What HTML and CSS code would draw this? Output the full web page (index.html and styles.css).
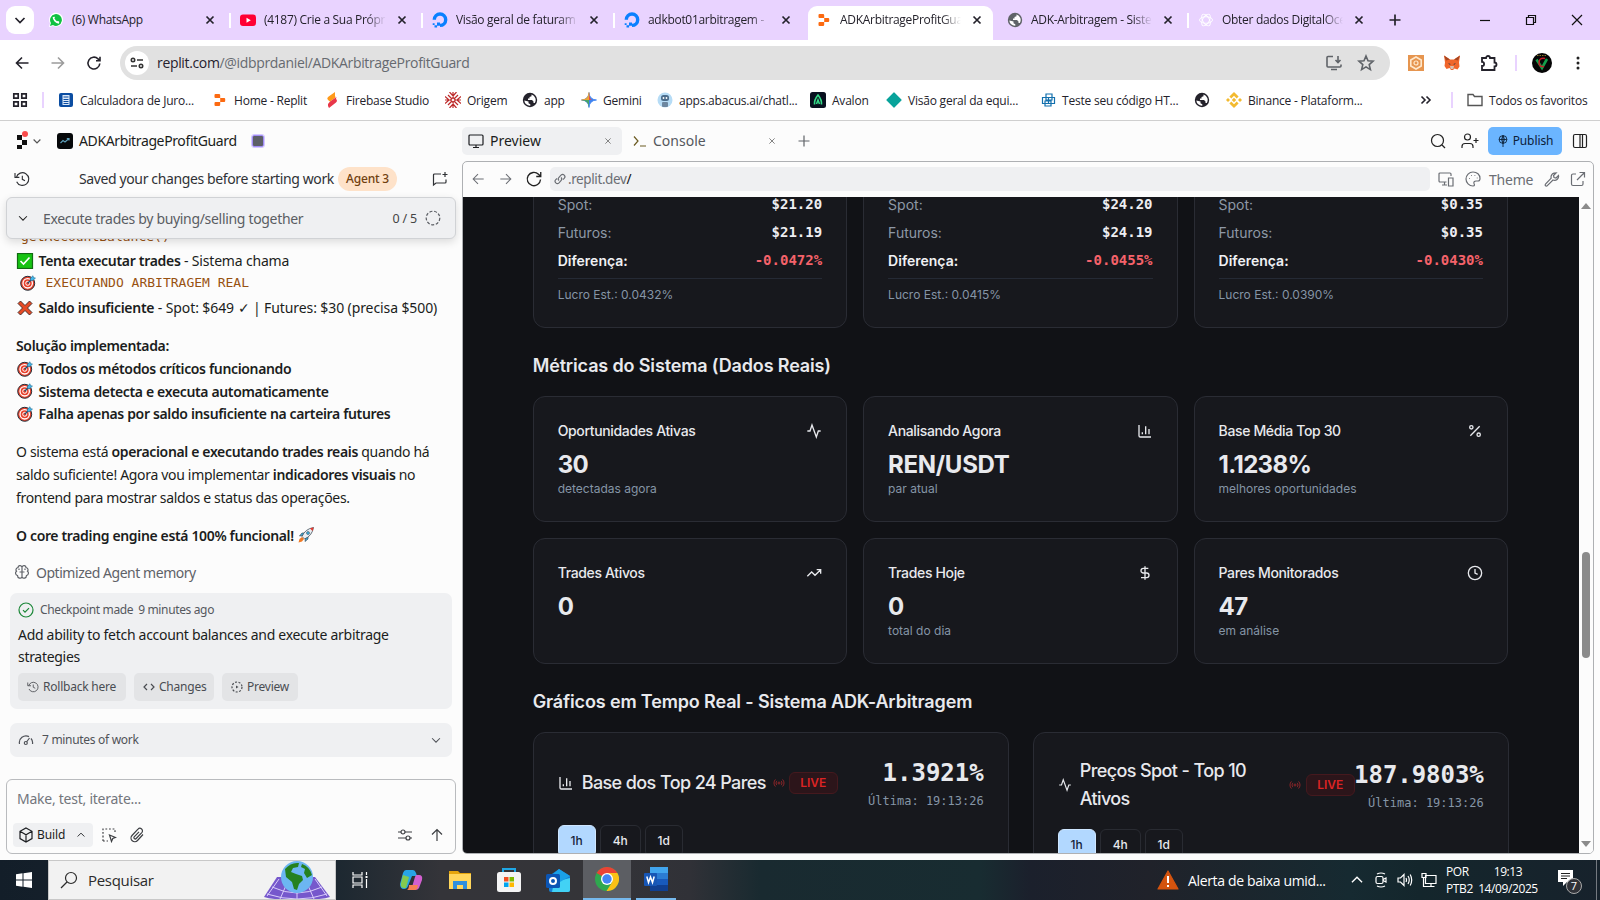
FILE: index.html
```html
<!DOCTYPE html>
<html lang="pt-BR">
<head>
<meta charset="utf-8">
<title>ADKArbitrageProfitGuard - Replit</title>
<link rel="stylesheet" href="styles.css">
</head>
<body>
<svg class="defs" width="0" height="0">
  <symbol id="x" viewBox="0 0 16 16"><path d="M4.500 4.500l7 7M11.500 4.500l-7 7"/></symbol>
  <symbol id="down" viewBox="0 0 16 16"><path d="M3.500 6l4.500 4.500L12.500 6"/></symbol>
  <symbol id="left" viewBox="0 0 16 16"><path d="M14.500 8H2.500M8 2.500L2.500 8 8 13.500"/></symbol>
  <symbol id="right" viewBox="0 0 16 16"><path d="M1.500 8h12M8 2.500L13.500 8 8 13.500"/></symbol>
  <symbol id="plus" viewBox="0 0 16 16"><path d="M8 2.500v11M2.500 8h11"/></symbol>
  <symbol id="reload" viewBox="0 0 16 16"><path d="M13.800 8.500A5.900 5.900 0 1 1 12 3.800l2 1.900M14 1.800v4h-4"/></symbol>
  <symbol id="globe" viewBox="0 0 16 16"><circle cx="8" cy="8" r="7.200" fill="currentColor" stroke="none"/><path d="M9.500 2.500v1.700L7.500 5v1.500H6V8h4l1.500 1.500V11h1.300A5.700 5.700 0 0 0 9.500 2.500zM2.300 8.500L6.500 9.500v1.800l1.800 1v1.400A5.700 5.700 0 0 1 2.300 8.500z" fill="#fff" stroke="none"/></symbol>
  <symbol id="do" viewBox="0 0 16 16"><path d="M8 13.400A5.700 5.700 0 1 0 2.300 7.700" stroke="#0a80ff" stroke-width="3.400"/><path d="M5 10.500h3v3.200H5zM2.500 13.200h2.600v2.300H2.500zM.7 11.200h1.900v1.900H.7z" fill="#0a80ff" stroke="none"/></symbol>
  <symbol id="replit" viewBox="0 0 16 16"><path d="M3.500 2h3.500q1.200 0 1.200 1.200v2.800H3.500q-1 0-1-1V3q0-1 1-1zM8.200 6h4q1 0 1 1v2q0 1-1 1H8.200zM2.500 11q0-1 1-1h4.700V12.800q0 1.200-1.200 1.200h-3.500q-1 0-1-1z" fill="currentColor" stroke="none"/></symbol>
  <symbol id="history" viewBox="0 0 24 24"><path d="M3.500 9.500A9.500 9.500 0 1 1 4 16M1.500 3v6.500H8M12.500 7v5.500l4 2"/></symbol>
  <symbol id="target" viewBox="0 0 16 16"><circle cx="7.700" cy="8.300" r="7" fill="#e8412c" stroke="#24303a" stroke-width="1"/><circle cx="7.700" cy="8.300" r="4.700" fill="#e8412c" stroke="#fff" stroke-width="1.300"/><circle cx="7.700" cy="8.300" r="2" fill="#e8412c" stroke="#fff" stroke-width="1"/><path d="M7.700 8.300L12 4" stroke="#234f70" stroke-width="1.400"/><path d="M10.500 5.500V3L13 .7l.5 1.900 2 .5L13 5.500z" fill="#42b5e8" stroke="#155e83" stroke-width=".5"/></symbol>
  <symbol id="pulse" viewBox="0 0 24 24"><path d="M22 12h-3.500l-3 9L9 3l-3 9H2"/></symbol>
  <symbol id="bars" viewBox="0 0 24 24"><path d="M3 3v16a2 2 0 0 0 2 2h16M8 17v-3M13 17V5M18 17V9"/></symbol>
  <symbol id="radio" viewBox="0 0 24 24"><path d="M4.900 19.100C1 15.200 1 8.800 4.900 4.900M7.800 16.200c-2.300-2.300-2.300-6.100 0-8.500M16.200 7.800c2.300 2.300 2.300 6.100 0 8.500M19.100 4.900C23 8.800 23 15.100 19.100 19"/><circle cx="12" cy="12" r="2"/></symbol>
</svg>

<header class="browser">
  <div class="tabstrip">
    <div class="tabsearch"><svg class="i16 w2"><use href="#down"/></svg></div>
    <div class="tab"><svg class="i16" viewBox="0 0 16 16"><path d="M1 15l1-3.800A7 7 0 1 1 5 14z" fill="#fff" stroke="none"/><path d="M2 14l.9-3A5.900 5.900 0 1 1 5 13.100z" fill="#10c142" stroke="none"/><path d="M5.500 5c0 3 2.500 5.500 5.500 5.800M5.500 5l.8 1.500M11 10.800l-1.600-1" stroke="#fff" stroke-width="1.700"/></svg><span>(6) WhatsApp</span><svg class="i16 w2"><use href="#x"/></svg></div>
    <div class="tab sep"><svg class="i16" viewBox="0 0 16 16"><rect y="2.500" width="16" height="11.500" rx="3" fill="#ff0033" stroke="none"/><path d="M6.500 5.800v5l4.300-2.500z" fill="#fff" stroke="none"/></svg><span class="fade">(4187) Crie a Sua Própr</span><svg class="i16 w2"><use href="#x"/></svg></div>
    <div class="tab sep"><svg class="i16"><use href="#do"/></svg><span class="fade">Visão geral de faturam</span><svg class="i16 w2"><use href="#x"/></svg></div>
    <div class="tab sep"><svg class="i16"><use href="#do"/></svg><span class="fade">adkbot01arbitragem -</span><svg class="i16 w2"><use href="#x"/></svg></div>
    <div class="tab active"><svg class="i16 orange"><use href="#replit"/></svg><span class="fade">ADKArbitrageProfitGua</span><svg class="i16 w2"><use href="#x"/></svg></div>
    <div class="tab"><svg class="i16 gray"><use href="#globe"/></svg><span class="fade">ADK-Arbitragem - Siste</span><svg class="i16 w2"><use href="#x"/></svg></div>
    <div class="tab sep"><svg class="i16 openai" viewBox="0 0 16 16"><ellipse cx="8" cy="8" rx="6.500" ry="3.300"/><ellipse cx="8" cy="8" rx="6.500" ry="3.300" transform="rotate(60 8 8)"/><ellipse cx="8" cy="8" rx="6.500" ry="3.300" transform="rotate(120 8 8)"/></svg><span class="fade">Obter dados DigitalOce</span><svg class="i16 w2"><use href="#x"/></svg></div>
    <div class="newtab"><svg class="i16 w2"><use href="#plus"/></svg></div>
    <div class="winctl"><svg class="i14" viewBox="0 0 14 14"><path d="M2 7.500h10"/></svg><svg class="i14" viewBox="0 0 14 14"><path d="M2.500 4.500h7v7h-7zM4.500 4.500v-2h7v7h-2"/></svg><svg class="i14" viewBox="0 0 14 14"><path d="M2 2l10 10M12 2L2 12"/></svg></div>
  </div>
  <div class="toolbar">
    <div class="nav"><svg class="i16"><use href="#left"/></svg><svg class="i16 dim"><use href="#right"/></svg><svg class="i16"><use href="#reload"/></svg></div>
    <div class="omnibox">
      <span class="site"><svg class="i14" viewBox="0 0 14 14"><circle cx="3" cy="4" r="1.700"/><path d="M7 4h6M1 10h6"/><circle cx="11" cy="10" r="1.700"/></svg></span>
      <span class="url">replit.com<em>/@idbprdaniel/ADKArbitrageProfitGuard</em></span>
      <svg class="i18" viewBox="0 0 18 18"><path d="M8 2.500H3a1 1 0 0 0-1 1V12a1 1 0 0 0 1 1h12a1 1 0 0 0 1-1v-1.500M6 15.500h6M13 2v6M10.500 6L13 8.500 15.500 6"/></svg>
      <svg class="i18" viewBox="0 0 18 18"><path d="M9 2l2 4.800 5.100.4-3.900 3.400 1.200 5L9 12.900l-4.400 2.700 1.200-5L1.900 7.200 7 6.800z"/></svg>
    </div>
    <div class="ext">
      <svg class="i16" viewBox="0 0 16 16"><rect width="16" height="16" fill="#e6954f" stroke="none"/><path d="M8 2l5.200 3v6L8 14l-5.200-3V5z" stroke="#ffe8cc" stroke-width="1.600"/><circle cx="8" cy="8" r="2" stroke="#ffe8cc"/></svg>
      <svg class="i16" viewBox="0 0 16 16"><path d="M0 .5l6 4h4l6-4-1 7 .5 4-2 3-3-1-1.500 1.500h-2L5.500 13l-3 1-2-3L1 7.500z" fill="#f0662c" stroke="none"/><path d="M0 .5l6 4-4 1zM16 .5l-6 4 4 1z" fill="#a8451f" stroke="none"/><path d="M6 11h4l-.7 3H6.700z" fill="#d6c0b3" stroke="none"/><path d="M4 8l2.500 1L6 10zM12 8l-2.500 1 .5 1z" fill="#2c3a4c" stroke="none"/></svg>
      <svg class="i18 puzzle" viewBox="0 0 18 18"><path d="M2 4h4a2 2 0 0 1 4 0h4.500v4.500a2 2 0 0 1 0 4V16H2v-4a2 2 0 0 0 0-4.200z"/></svg>
      <i class="vsep"></i>
      <svg class="i20" viewBox="0 0 20 20"><circle cx="10" cy="10" r="10" fill="#050505" stroke="none"/><path d="M4.500 6.500L10 15l5-9" stroke="#129f4a" stroke-width="2.600"/><path d="M13 5.500c-4-1-6 1-6 4s2 4.500 5 4" stroke="#c71c27" stroke-width="1.500"/><path d="M5 2.500h10" stroke="#8a762b" stroke-dasharray="1.500 1"/></svg>
      <svg class="i16" viewBox="0 0 16 16"><g fill="#222" stroke="none"><circle cx="8" cy="3" r="1.500"/><circle cx="8" cy="8" r="1.500"/><circle cx="8" cy="13" r="1.500"/></g></svg>
    </div>
  </div>
  <div class="bookmarks">
    <svg class="i16" viewBox="0 0 16 16"><path d="M1.800 1.800h4.400v4.400H1.800zM9.800 1.800h4.400v4.400H9.800zM1.800 9.800h4.400v4.400H1.800zM9.800 9.800h4.400v4.400H9.800z" stroke-width="1.700"/></svg>
    <i class="vsep"></i>
    <div class="bm"><svg class="i16" viewBox="0 0 16 16"><rect x="1" y="1" width="14" height="14" rx="2" fill="#0b4da2" stroke="none"/><rect x="4.500" y="3" width="7" height="10" fill="#dce9f8" stroke="none"/><path d="M5.500 5h5M5.500 7.500h5M5.500 9.500h5M5.500 11.500h5" stroke="#0b4da2"/></svg><span>Calculadora de Juro...</span></div>
    <div class="bm"><svg class="i16 orange"><use href="#replit"/></svg><span>Home - Replit</span></div>
    <div class="bm"><svg class="i16" viewBox="0 0 16 16"><path d="M11 0L4 5q-1.500 1.500 0 3l2 1.500 5-3.500q1-1 0-2z" fill="#ff9a1a" stroke="none"/><path d="M12.500 5L6 9.500 4 12q-.5 2 1 4l7-5.500q1.700-2 0-4z" fill="#e8374a" stroke="none"/></svg><span>Firebase Studio</span></div>
    <div class="bm"><svg class="i16" viewBox="0 0 16 16"><path d="M8 0v4L4.500 0M8 4l3.500-4M8 16v-4l-3.500 4M8 12l3.500 4M0 8h4L0 4.500M4 8l-4 3.500M16 8h-4l4-3.500M12 8l4 3.500M3 3l3.500 3.500M13 3L9.500 6.500M3 13l3.500-3.500M13 13L9.500 9.500M8 5.500L10.500 8 8 10.500 5.500 8z" stroke="#bd2b2b" stroke-width="1.200"/></svg><span>Origem</span></div>
    <div class="bm"><svg class="i16"><use href="#globe"/></svg><span>app</span></div>
    <div class="bm"><svg class="i16" viewBox="0 0 16 16"><path d="M8 .5Q8.500 7.500 15.500 8 8.500 8.500 8 15.500 7.500 8.500.5 8 7.500 7.500 8 .5z" fill="#3f83f0" stroke="#3f83f0" stroke-width=".8"/><path d="M8 .5Q7.500 7.500.5 8L8 8z" fill="#eea533" stroke="#eea533" stroke-width=".6"/><path d="M8 .5Q8.500 7.500 11 7.700L8 8z" fill="#e84a42" stroke="none"/><path d="M.5 8q7 .5 7.500 7.500V8z" fill="#4aa568" stroke="none"/></svg><span>Gemini</span></div>
    <div class="bm"><svg class="i16" viewBox="0 0 16 16"><circle cx="8" cy="8" r="7.500" fill="#b6dcf6" stroke="none"/><rect x="4" y="3" width="8" height="6" rx="2.500" fill="#4c6d8c" stroke="none"/><rect x="5" y="10" width="6" height="5" rx="1" fill="#6d87a0" stroke="none"/><circle cx="6.500" cy="6" r=".9" fill="#fff" stroke="none"/><circle cx="9.500" cy="6" r=".9" fill="#fff" stroke="none"/></svg><span>apps.abacus.ai/chatl...</span></div>
    <div class="bm"><svg class="i16" viewBox="0 0 16 16"><rect width="16" height="16" rx="2.500" fill="#08101f" stroke="none"/><path d="M4.500 12.500Q4 8 8 3q4 5 3.500 9.500M6.500 12l1.500-4 1.500 4" stroke="#35d987" stroke-width="1.600"/></svg><span>Avalon</span></div>
    <div class="bm"><svg class="i16" viewBox="0 0 16 16"><path d="M8 1l7 7-7 7-7-7z" fill="#08a39b" stroke="#08a39b" stroke-linejoin="round"/></svg><span>Visão geral da equi...</span></div>
    <div class="bm"><svg class="i16" viewBox="0 0 16 16"><path d="M6 2h6v6H6zM2.500 5.500h6v6h-6zM8.500 5.500h6v6h-6zM5 9h6v5H5z" stroke="#1370ad"/></svg><span>Teste seu código HT...</span></div>
    <div class="bm"><svg class="i16"><use href="#globe"/></svg></div>
    <div class="bm"><svg class="i16" viewBox="0 0 16 16"><g fill="#f3ba2f" stroke="none"><path d="M8 5.800L10.200 8 8 10.200 5.800 8zM2 6l2 2-2 2-2-2zM14 6l2 2-2 2-2-2zM8 0l4.600 4.600-1.900 1.900L8 3.800 5.300 6.500 3.400 4.600zM8 16l4.600-4.600-1.900-1.900L8 12.200 5.300 9.500l-1.900 1.900z"/></g></svg><span>Binance - Plataform...</span></div>
    <svg class="i16" viewBox="0 0 16 16"><path d="M3.500 4.500L7 8l-3.500 3.500M8.500 4.500L12 8l-3.500 3.500" stroke-width="1.600"/></svg>
    <i class="vsep"></i>
    <div class="bm"><svg class="i16" viewBox="0 0 16 16"><path d="M1 13.500V2.500h5l1.500 2H15v9z" stroke="#555" stroke-width="1.400"/></svg><span>Todos os favoritos</span></div>
  </div>
</header>

<main class="app">
  <section class="agent">
    <div class="apphead">
      <svg class="logo" viewBox="0 0 22 22"><path d="M1 5h5v5H1zM6 10h5v5H6zM1 15h5v4H1z" fill="#111" stroke="none"/><circle cx="9" cy="4" r="3" fill="#fa4b4b" stroke="none"/></svg>
      <svg class="i12"><use href="#down"/></svg>
      <svg class="i16" viewBox="0 0 16 16"><rect width="16" height="16" rx="3" fill="#06080a" stroke="none"/><path d="M3.500 10L6 7.500l2 1.500 4-3.500M9.800 5.500H12v2" stroke="#5e9fba"/></svg>
      <span class="appname">ADKArbitrageProfitGuard</span>
      <i class="stop"></i>
    </div>
    <div class="saved">
      <svg class="i16 hist"><use href="#history"/></svg>
      <span class="savedtxt">Saved your changes before starting work</span>
      <b class="chip">Agent 3</b>
      <svg class="i16 chat" viewBox="0 0 16 16"><path d="M9 3H2.500a1 1 0 0 0-1 1v10L4 12h9a1 1 0 0 0 1-1V8.500M13 1v5M10.500 3.500h5"/></svg>
    </div>
    <div class="task">
      <svg class="i14"><use href="#down"/></svg><span>Execute trades by buying/selling together</span><small>0 / 5</small>
      <svg class="i16" viewBox="0 0 16 16"><circle cx="8" cy="8" r="6.800" stroke-dasharray="3 1.700"/></svg>
    </div>
    <div class="feed">
      <div class="clip"><code>getAccountBalance()</code></div>
      <p class="l1"><svg class="emo" viewBox="0 0 16 16"><rect x=".5" y=".5" width="15" height="15" fill="#17c313" stroke="#126b12"/><path d="M3.500 8l3 3 6-6.500" stroke="#fff" stroke-width="1.700"/></svg><b>Tenta executar trades</b>&nbsp;- Sistema chama</p>
      <p class="l2"><svg class="emo"><use href="#target"/></svg><code>EXECUTANDO ARBITRAGEM REAL</code></p>
      <p class="l3"><svg class="emo" viewBox="0 0 16 16"><path d="M1 3.500L3.500 1 8 5.500 12.500 1 15 3.500 10.500 8l4.500 4.500-2.500 2.500L8 10.500 3.500 15 1 12.500 5.500 8z" fill="#e64a25" stroke="#3b2625" stroke-width=".9"/></svg><b>Saldo insuficiente</b>&nbsp;- Spot: $649 ✓ | Futures: $30 (precisa $500)</p>
      <p class="l4"><b>Solução implementada:</b></p>
      <p><svg class="emo"><use href="#target"/></svg><b>Todos os métodos críticos funcionando</b></p>
      <p><svg class="emo"><use href="#target"/></svg><b>Sistema detecta e executa automaticamente</b></p>
      <p><svg class="emo"><use href="#target"/></svg><b>Falha apenas por saldo insuficiente na carteira futures</b></p>
      <p class="gap">O sistema está&nbsp;<b>operacional e executando trades reais</b>&nbsp;quando há</p>
      <p>saldo suficiente! Agora vou implementar&nbsp;<b>indicadores visuais</b>&nbsp;no</p>
      <p>frontend para mostrar saldos e status das operações.</p>
      <p class="gap"><b>O core trading engine está 100% funcional!</b>&nbsp;<svg class="emo" viewBox="0 0 16 16"><path d="M4.500 8.500L1.500 9l2.500-3h3zM7.500 11.500L7 14.500l3-2.500V9z" fill="#3db1e2" stroke="#2b3945" stroke-width=".6"/><path d="M4 9.500Q7 2 15.500.5 14 9 6.500 12z" fill="#e9eef2" stroke="#2b3945" stroke-width=".7"/><path d="M12 1.500q2-1 3.500-1-.3 2-1 3.500z" fill="#e33b31" stroke="none"/><circle cx="10" cy="6" r="1.500" fill="#3db1e2" stroke="#2b3945" stroke-width=".5"/><path d="M4 10l2 2-2 2.500-3.500 1 1-3.500z" fill="#ef7a25" stroke="none"/></svg></p>
      <p class="memory"><svg class="i16" viewBox="0 0 16 16"><path d="M8 2.500v11M8 3C7 .8 4 1.500 4 3.500 1.800 4 1.500 6 2.500 7.200.8 8.500 1.500 11 3.500 11.500 3.500 14.500 7 15 8 13c1 2 4.500 1.500 4.500-1.500 2-.5 2.700-3 1-4.300C14.500 6 14.200 4 12 3.500 12 1.500 9 .8 8 3M5.500 8H8M5 4.500v1.500M11 4.500v1.500M8 8h2.500"/></svg><span>Optimized Agent memory</span></p>
      <article class="checkpoint">
        <div class="cphead"><svg class="i16" viewBox="0 0 16 16"><circle cx="8" cy="8" r="7"/><path d="M5 8.200l2 2 4-4"/></svg><span>Checkpoint made</span><span>9 minutes ago</span></div>
        <div class="cptext">Add ability to fetch account balances and execute arbitrage<br>strategies</div>
        <div class="cpbtns">
          <span><svg class="i12 hist"><use href="#history"/></svg>Rollback here</span>
          <span><svg class="i12" viewBox="0 0 12 12"><path d="M4 3L1 6l3 3M8 3l3 3-3 3"/></svg>Changes</span>
          <span><svg class="i12" viewBox="0 0 12 12"><circle cx="6" cy="6" r="5" stroke-dasharray="2 1.500"/><path d="M5 4.500L7.500 6 5 7.500z" fill="currentColor" stroke="none"/></svg>Preview</span>
        </div>
      </article>
      <div class="work"><svg class="i16" viewBox="0 0 16 16"><path d="M1.500 12A6.700 6.700 0 0 1 11 4.600M13 6.500a6.700 6.700 0 0 1 1.500 5.500M8.500 10l3-4"/><circle cx="7.800" cy="11" r="1.500"/></svg><span>7 minutes of work</span><svg class="i14"><use href="#down"/></svg></div>
    </div>
    <div class="prompt">
      <div class="ph">Make, test, iterate...</div>
      <div class="pbar">
        <span class="build"><svg class="i16" viewBox="0 0 16 16"><path d="M8 1l6 3.300v7.300L8 15l-6-3.400V4.300zM2 4.300l6 3.400 6-3.400M8 7.700V15"/></svg>Build<svg class="i12 flip"><use href="#down"/></svg></span>
        <svg class="i16" viewBox="0 0 16 16"><path d="M2 14V2h12v4M2 14h5" stroke-dasharray="1.800 1.800"/><path d="M8.500 8l6 2.500-2.700 1-1.300 3z"/></svg>
        <svg class="i16" viewBox="0 0 16 16"><path d="M14 7.500L8.500 13.500a3.700 3.700 0 0 1-5.500-5L9 2.200a2.500 2.500 0 0 1 3.800 3.400L7.200 11.500a1.200 1.200 0 0 1-2-1.700L10 4.800"/></svg>
        <svg class="i16 opts" viewBox="0 0 16 16"><path d="M1 5h3M8 5h7M1 11h8M13 11h2"/><circle cx="6" cy="5" r="2"/><circle cx="11" cy="11" r="2"/></svg>
        <svg class="i16" viewBox="0 0 16 16"><path d="M8 14V3M3 7.500L8 2.500l5 5"/></svg>
      </div>
    </div>
  </section>

  <section class="work-area">
    <div class="panes">
      <div class="pane on"><svg class="i16" viewBox="0 0 16 16"><rect x="1" y="2" width="14" height="10" rx="1"/><path d="M8 12v2.500M5 14.500h6"/></svg><span>Preview</span><svg class="i12"><use href="#x"/></svg></div>
      <div class="pane"><svg class="i16 olive" viewBox="0 0 16 16"><path d="M2 3.500L6 8l-4 4.500M8 13h6"/></svg><span>Console</span><svg class="i12"><use href="#x"/></svg></div>
      <svg class="i16 gray"><use href="#plus"/></svg>
      <div class="tools">
        <svg class="i16" viewBox="0 0 16 16"><circle cx="7.500" cy="7.500" r="6"/><path d="M12 12l3 3"/></svg>
        <svg class="i18" viewBox="0 0 18 18"><circle cx="6.500" cy="5" r="3"/><path d="M1 16v-1.500q0-3 3-3h5q3 0 3 3V16M15 6v5M12.500 8.500h5"/></svg>
        <span class="publish"><svg class="i12" viewBox="0 0 12 12"><circle cx="6" cy="4.500" r="3.900" stroke-width=".9"/><path d="M2.200 4.500h7.600M6 .6V12M6 .6Q3 4.500 6 8.400M6 .6q3 3.900 0 7.800" stroke-width=".9"/></svg>Publish</span>
        <svg class="i16" viewBox="0 0 16 16"><rect x="1.500" y="1.500" width="13" height="13" rx="1.500"/><path d="M8 1.500v13M10.500 1.500v13"/></svg>
      </div>
    </div>
    <div class="frame">
      <div class="fbar">
        <svg class="i14"><use href="#left"/></svg><svg class="i14"><use href="#right"/></svg><svg class="i18 dark"><use href="#reload"/></svg>
        <div class="furl"><svg class="i12" viewBox="0 0 12 12"><path d="M5 7.500a2.300 2.300 0 0 1 0-3.200L7 2.200a2.200 2.200 0 0 1 3.200 3.200L9 6.500M7 4.500a2.300 2.300 0 0 1 0 3.200L5 9.800a2.200 2.200 0 0 1-3.200-3.200L3 5.500"/></svg><span>.replit.dev<em>/</em></span></div>
        <svg class="i16" viewBox="0 0 16 16"><path d="M8.500 11H2a1 1 0 0 1-1-1V3a1 1 0 0 1 1-1h10a1 1 0 0 1 1 1v2M4 14h5M6.500 11v3M10.500 7H15v8h-4.500z"/></svg>
        <svg class="i16" viewBox="0 0 16 16"><path d="M8 1a7 7 0 0 0 0 14c2 0 1.500-1.500 1-2.500-.5-1.500.5-2.500 2-2.500h2c1.500 0 2-1 2-2.500C15 3.500 12 1 8 1z"/><path d="M4 7.500h.8M6 4.500h.8M9.500 4.500h.8M11.800 7h.8" stroke-width="1.200"/></svg>
        <span class="theme">Theme</span>
        <svg class="i16" viewBox="0 0 16 16"><path d="M10 2.200a4 4 0 0 0-2.800 5L1.500 13q-.8 1.500.5 2 .8.300 1.300-.3L9 9a4 4 0 0 0 5.500-4.500L12 7l-2-.5-.5-2L12 2z"/></svg>
        <svg class="i16" viewBox="0 0 16 16"><path d="M6 3H3a1.500 1.500 0 0 0-1.500 1.500V13A1.500 1.500 0 0 0 3 14.500h8.500A1.500 1.500 0 0 0 13 13v-3M9.500 1.500h5v5M14.500 1.500L7 9"/></svg>
      </div>
      <div class="view">
        <div class="dash">
          <div class="grid3 pairs">
            <div class="card"><div class="r"><span>Spot:</span><b>$21.20</b></div><div class="r"><span>Futuros:</span><b>$21.19</b></div><div class="r d"><span>Diferença:</span><b>-0.0472%</b></div><div class="est">Lucro Est.: 0.0432%</div></div>
            <div class="card"><div class="r"><span>Spot:</span><b>$24.20</b></div><div class="r"><span>Futuros:</span><b>$24.19</b></div><div class="r d"><span>Diferença:</span><b>-0.0455%</b></div><div class="est">Lucro Est.: 0.0415%</div></div>
            <div class="card"><div class="r"><span>Spot:</span><b>$0.35</b></div><div class="r"><span>Futuros:</span><b>$0.35</b></div><div class="r d"><span>Diferença:</span><b>-0.0430%</b></div><div class="est">Lucro Est.: 0.0390%</div></div>
          </div>
          <h2>Métricas do Sistema (Dados Reais)</h2>
          <div class="grid3 metrics">
            <div class="card"><h3>Oportunidades Ativas<svg class="i16"><use href="#pulse"/></svg></h3><strong>30</strong><small>detectadas agora</small></div>
            <div class="card"><h3>Analisando Agora<svg class="i16"><use href="#bars"/></svg></h3><strong class="wide">REN/USDT</strong><small>par atual</small></div>
            <div class="card"><h3>Base Média Top 30<svg class="i16" viewBox="0 0 24 24"><path d="M19 5L5 19"/><circle cx="6.500" cy="6.500" r="2.500"/><circle cx="17.500" cy="17.500" r="2.500"/></svg></h3><strong>1.1238%</strong><small>melhores oportunidades</small></div>
            <div class="card"><h3>Trades Ativos<svg class="i16" viewBox="0 0 24 24"><path d="M22 7l-8.500 8.500-5-5L2 17M16 7h6v6"/></svg></h3><strong>0</strong></div>
            <div class="card"><h3>Trades Hoje<svg class="i16" viewBox="0 0 24 24"><path d="M12 2v20M17 5H9.500a3.500 3.500 0 0 0 0 7h5a3.500 3.500 0 0 1 0 7H6"/></svg></h3><strong>0</strong><small>total do dia</small></div>
            <div class="card"><h3>Pares Monitorados<svg class="i16" viewBox="0 0 24 24"><circle cx="12" cy="12" r="10"/><path d="M12 6v6l4 2"/></svg></h3><strong>47</strong><small>em análise</small></div>
          </div>
          <h2 class="h2b">Gráficos em Tempo Real - Sistema ADK-Arbitragem</h2>
          <div class="grid2">
            <div class="card chart">
              <div class="chead"><svg class="i16"><use href="#bars"/></svg><span class="ct">Base dos Top 24 Pares</span><svg class="i12 red"><use href="#radio"/></svg><b class="live">LIVE</b><div class="val"><strong>1.3921%</strong><small>Última: 19:13:26</small></div></div>
              <div class="seg"><b class="sel">1h</b><b>4h</b><b>1d</b></div>
            </div>
            <div class="card chart two">
              <div class="chead"><svg class="i14"><use href="#pulse"/></svg><span class="ct">Preços Spot - Top 10<br>Ativos</span><svg class="i12 red"><use href="#radio"/></svg><b class="live">LIVE</b><div class="val"><strong>187.9803%</strong><small>Última: 19:13:26</small></div></div>
              <div class="seg"><b class="sel">1h</b><b>4h</b><b>1d</b></div>
            </div>
          </div>
        </div>
        <div class="scroll"><i class="up"></i><i class="thumb"></i><i class="dn"></i></div>
      </div>
    </div>
  </section>
</main>

<footer class="taskbar">
  <div class="start"><svg class="i16" viewBox="0 0 16 16"><path d="M0 2.200l6.500-.9v6.200H0zM7.500 1.200L16 0v7.500H7.500zM0 8.500h6.500v6.200L0 13.800zM7.500 8.500H16V16l-8.500-1.200z" fill="#fff" stroke="none"/></svg></div>
  <div class="search"><svg class="i18" viewBox="0 0 18 18"><circle cx="11" cy="7" r="5.500"/><path d="M7 11l-6 6"/></svg><span>Pesquisar</span>
    <svg class="earth" viewBox="0 0 66 38"><path d="M13 16h38l15 20q-10 3-33 3T0 36z" fill="#7658cc" stroke="none"/><path d="M8 26q25 12 50 0M3 33q30 10 60 0M24 20l-8 18M33 20v19M42 20l8 18M15 18L3 35M51 18l12 17" stroke="#d9cdfb" stroke-width="1"/><circle cx="33" cy="16" r="16" fill="#6cb6f2" stroke="none"/><path d="M21 8q6-7 14-6l-1 4-5 1-2 4 5 2 6 2 1 4-4 4-2 6-3-1-2-7-6-5zM38 3q8 3 10 11l-5 3-3-5 1-4-4-2z" fill="#25811f" stroke="none"/></svg>
  </div>
  <div class="apps">
    <svg class="i18" viewBox="0 0 18 18"><path d="M2 1v3h9V1M2 17v-3h9v3M2 6h9v6H2zM15.500 1v3M15.500 8v9" stroke="#fff"/><path d="M14.500 5h2v2h-2z" fill="#fff" stroke="none"/></svg>
    <svg class="i24" viewBox="0 0 24 24"><path d="M7 2h7q2 0 3 3l1 3h-5L9 18q-1 3-4 3-4 0-4-5L4 5q1-3 3-3z" fill="#27a4e6" stroke="none"/><path d="M4 7L2 15q-1 5 3 5h2l3-11z" fill="#84c94f" stroke="none"/><path d="M17 7h3q4 0 3 5l-3 8q-1 2-4 2H9q3 0 4-3l3-10z" fill="#d25fd0" stroke="none"/><path d="M10 17h9l-1 4q-1 1-3 1H8q2-1 2-5z" fill="#f78055" stroke="none"/></svg>
    <svg class="i24" viewBox="0 0 24 24"><path d="M1 3h9l2 2h11v16H1z" fill="#e5a50d" stroke="none"/><path d="M1 6h22v15H1z" fill="#ffd65c" stroke="none"/><path d="M5 21v-8h14v8h-4v-4H9v4z" fill="#2f8fdd" stroke="none"/></svg>
    <svg class="i24" viewBox="0 0 24 24"><path d="M6 6V1h12v5" stroke="#1fa7e5" stroke-width="2"/><rect y="4" width="24" height="20" rx="2.500" fill="#f4f4f4" stroke="none"/><path d="M7 9h4.500v4.500H7z" fill="#f25022" stroke="none"/><path d="M12.500 9H17v4.500h-4.500z" fill="#7fba00" stroke="none"/><path d="M7 14.500h4.500V19H7z" fill="#00a4ef" stroke="none"/><path d="M12.500 14.500H17V19h-4.500z" fill="#ffb900" stroke="none"/></svg>
    <svg class="i24" viewBox="0 0 24 24"><path d="M3 8l10-7 11 7v14q0 2-2 2H5q-2 0-2-2z" fill="#1580d6" stroke="none"/><path d="M8 14l16-4v12q0 2-2 2H6z" fill="#42d2f5" stroke="none"/><path d="M13 1l11 7-10 6-8-7z" fill="#1aa1e8" stroke="none"/><rect y="6" width="14" height="14" rx="1.500" fill="#0b55b4" stroke="none"/><circle cx="7" cy="13" r="3" stroke="#fff" stroke-width="2"/></svg>
    <div class="open"><svg class="i24" viewBox="0 0 24 24"><circle cx="12" cy="12" r="12" fill="#2fa84f" stroke="none"/><path d="M12 12L1.600 6A12 12 0 0 1 22.400 6z" fill="#ea4335" stroke="none"/><path d="M12 6h10.400A12 12 0 0 1 11.500 24L17.200 15z" fill="#fbc116" stroke="none"/><circle cx="12" cy="12" r="6" fill="#fff" stroke="none"/><circle cx="12" cy="12" r="4.700" fill="#4285f4" stroke="none"/></svg></div>
    <div class="open word"><svg class="i24" viewBox="0 0 24 24"><path d="M6 0h18v6H6z" fill="#41a5ee" stroke="none"/><path d="M6 6h18v6H6z" fill="#2b7cd3" stroke="none"/><path d="M6 12h18v6H6z" fill="#185abd" stroke="none"/><path d="M6 18h18v6H6z" fill="#103f91" stroke="none"/><rect y="6" width="13" height="13" rx="1" fill="#1756b5" stroke="none"/><path d="M2.800 9.500L4.500 15.500 6.500 10l2 5.500 1.700-6" stroke="#fff" stroke-width="1.500"/></svg></div>
  </div>
  <div class="tray">
    <svg class="warn" viewBox="0 0 22 20"><path d="M11 1l10 18H1z" fill="#d4540f" stroke="#d4540f" stroke-linejoin="round"/><path d="M11 6v7M11 15v2" stroke="#fff" stroke-width="2"/></svg>
    <span class="alert">Alerta de baixa umid...</span>
    <svg class="i18 up"><use href="#down"/></svg>
    <svg class="i16" viewBox="0 0 16 16"><rect x="3" y="4.500" width="7" height="7" rx="1.500"/><path d="M10 7.500l3-1.500v4l-3-1.500M4 2q4-2 8 0M4 14q4 2 8 0"/></svg>
    <svg class="i16" viewBox="0 0 16 16"><path d="M1 6h2.500L7 2.500v11L3.500 10H1zM9 6q1 2 0 4M11 4q2.500 4 0 8M13.200 2.500q3 5.500 0 11"/></svg>
    <svg class="i16" viewBox="0 0 16 16"><path d="M4.500 3.500H15v8H4.500zM10 11.500v3M6.500 14.500h7M1 1.500h4v4H1zM2.500 5.500v9h4"/></svg>
    <span class="lang">POR<br>PTB2</span>
    <span class="clock">19:13<br>14/09/2025</span>
    <div class="notif"><svg class="i16" viewBox="0 0 16 16"><path d="M0 0h15v12H9l-4 4v-4H0z" fill="#fff" stroke="none"/><path d="M3 3.500h9M3 6h9M3 8.500h6" stroke="#222"/></svg><em>7</em></div>
    <i class="edge"></i>
  </div>
</footer>
</body>
</html>
```
FILE: styles.css
```css
* { box-sizing: border-box; }
body { margin: 0; width: 1600px; height: 900px; overflow: hidden; background: #fcfcfc; display: flex; flex-direction: column; font-family: "Noto Sans", sans-serif; white-space: nowrap; }
svg { fill: none; stroke: currentColor; stroke-width: 1.2; flex: none; display: block; }
.defs { position: absolute; }
i, em { font-style: normal; }
h2, h3, p { margin: 0; font-weight: inherit; }
.i12 { width: 12px; height: 12px; }
.i14 { width: 14px; height: 14px; }
.i16 { width: 16px; height: 16px; }
.i18 { width: 18px; height: 18px; }
.i20 { width: 20px; height: 20px; }
.i24 { width: 24px; height: 24px; }
.w2 { stroke-width: 1.7; }
.hist { stroke-width: 1.7; }
.orange { color: #fc6a11; }
.gray { color: #5f6368; }

/* browser chrome */
.browser { height: 121px; flex: none; background: #fff; border-bottom: 1px solid #cfcfcf; color: #24222b; font-family: "Open Sans", sans-serif; font-size: 12px; letter-spacing: -.15px; }
.tabstrip { height: 40px; background: #e9d3ff; display: grid; grid-template-columns: 28px 192px 192px 192px 192px 191px 191px 191px 33px 1fr; padding-left: 6px; letter-spacing: -.3px; }
.tabsearch { margin-top: 6px; width: 28px; height: 28px; border-radius: 9px; background: #fff; display: grid; place-items: center; }
.tab { width: 192px; margin-left: 4px; padding-left: 10px; height: 40px; display: flex; align-items: center; gap: 8px; position: relative; }
.tab span { width: 122px; line-height: 20px; }
.tab.active span, .tab.active ~ .tab span { width: 121px; }
.fade { mask-image: linear-gradient(90deg, #000 84%, transparent 100%); }
.tab.sep::before { content: ""; position: absolute; left: -1px; top: 13px; width: 2px; height: 15px; background: #fff; }
.tab.active { z-index: 1; }
.tab.active::after { content: ""; position: absolute; z-index: -1; left: 2px; top: 6px; width: 185px; height: 34px; border-radius: 9px 9px 0 0; background: #fff; }
.openai { color: #fff; stroke-width: .9; }
.newtab { display: grid; place-items: center; padding-left: 6px; }
.winctl { display: flex; justify-content: flex-end; align-items: center; gap: 32px; padding-right: 16px; color: #111; }
.toolbar { height: 44px; padding-top: 2px; display: flex; align-items: center; }
.nav { width: 120px; display: flex; gap: 20px; padding-left: 14px; }
.nav svg { stroke-width: 1.6; }
.dim { color: #9c9c9c; }
.omnibox { width: 1270px; height: 34px; border-radius: 17px; background: #e1e1e1; display: flex; align-items: center; padding: 0 15px 0 5px; color: #5f6368; }
.omnibox svg { stroke-width: 1.6; }
.omnibox > svg + svg { margin-left: 14px; }
.site { width: 24px; height: 24px; border-radius: 50%; background: #fff; display: grid; place-items: center; color: #333; }
.url { flex: 1; padding: 0 0 1px 8px; font-size: 14px; color: #26212d; letter-spacing: -.34px; }
.url em { color: #666a70; }
.ext { display: flex; align-items: center; padding-left: 18px; }
.ext svg + svg { margin-left: 20px; }
.ext .puzzle { stroke-width: 1.8; }
.vsep { width: 2px; height: 16px; background: #e9d3ff; }
.ext .vsep { margin: 0 15px 0 17px; }
.ext .vsep + svg + svg { margin-left: 18px; }
.bookmarks { height: 32px; display: grid; align-items: center; padding-left: 12px; letter-spacing: -.22px; grid-template-columns: 30px 16px 154px 112px 121px 77px 59px 76px 153px 76px 154px 154px 32px 192px 33px 16px 130px; }
.bm { display: flex; align-items: center; gap: 6px; }

/* agent column */
.app { height: 739px; flex: none; display: flex; color: #1b1d20; }
.agent { width: 462px; flex: none; letter-spacing: -.32px; }
.apphead { height: 40px; display: flex; align-items: center; padding-left: 16px; }
.logo { width: 22px; height: 22px; margin-right: -7px; }
.apphead .i12 { margin: 0 14px 0 0; color: #555; stroke-width: 1.600; }
.appname { box-sizing: content-box; width: 167px; padding: 0 0 1px 6px; font-size: 14px; letter-spacing: -.38px; }
.stop { width: 12px; height: 12px; margin-left: 6px; background: #5c5f67; border: 1px solid #a18cf5; outline: 1px solid #d4c9ff; border-radius: 2px; }
.saved { height: 36px; display: flex; align-items: center; padding: 0 0 1px 14px; font-size: 14px; color: #303236; }
.savedtxt { margin-left: 49px; width: 259px; letter-spacing: -.38px; }
.chip { height: 24px; width: 59px; text-align: center; line-height: 24px; border-radius: 12px; background: #fee2c9; color: #70400f; font-size: 12px; font-weight: 500; letter-spacing: -.2px; }
.chat { margin-left: 35px; }
.task { position: relative; z-index: 2; margin-left: 6px; width: 450px; height: 42px; border: 1px solid #d0d2d5; border-radius: 6px; background: #eff0f2; box-shadow: 0 3px 8px #0002; display: flex; align-items: center; padding: 0 14px 0 9px; font-size: 14px; color: #5a5d63; }
.task svg:first-child { color: #222; }
.task span { flex: 1; padding-left: 13px; }
.task small { font-size: 12.500px; margin-right: 8px; color: #444; letter-spacing: -.2px; }
.feed { padding-left: 16px; font-size: 14px; }
.clip { height: 7px; overflow: hidden; position: relative; }
.clip code { display: block; margin: -11px 0 0 5px; }
code { font-family: "DejaVu Sans Mono", monospace; font-size: 13px; color: #985212; line-height: 18px; letter-spacing: 0; }
.feed p { height: 22.600px; display: flex; align-items: center; }
.feed b { font-weight: 600; letter-spacing: -.35px; }
.emo { width: 18px; height: 16px; margin-right: 4.500px; }
.feed .l1 { margin-top: 3.400px; letter-spacing: -.18px; }
.l1 b { letter-spacing: -.3px; }
.feed .l2 { padding-left: 3px; }
.l2 code { padding-left: 4px; }
.feed .l3 { margin-top: 2px; letter-spacing: -.1px; }
.feed .l3 b { letter-spacing: -.28px; }
.feed .l4 { margin-top: 15.500px; }
.feed .gap { margin-top: 15.500px; }
.feed .memory { margin: 14.600px 0 0 -2px; color: #5f6268; gap: 6px; letter-spacing: -.46px; }
.checkpoint { margin: 9px 0 0 -6px; width: 442px; height: 116px; border-radius: 7px; background: #eff0f2; padding: 6px 8px; }
.cphead { height: 22px; display: flex; align-items: center; gap: 5px; font-size: 12px; letter-spacing: -.36px; color: #55585e; }
.cphead svg { color: #1b8738; margin-right: 1px; }
.cptext { line-height: 22px; padding-top: 3px; letter-spacing: -.3px; }
.cpbtns { display: flex; gap: 8px; margin-top: 5px; font-size: 12px; color: #4a4d52; letter-spacing: -.23px; }
.cpbtns span { height: 28px; border-radius: 5px; background: #e3e4e6; display: flex; align-items: center; gap: 4px; padding-left: 9px; width: 108px; }
.cpbtns span:nth-child(2) { width: 80px; }
.cpbtns span:nth-child(3) { width: 76px; }
.work { margin: 14px 0 0 -6px; width: 442px; height: 34px; border-radius: 7px; background: #eff0f2; display: flex; align-items: center; padding: 0 9px 0 8px; font-size: 12px; letter-spacing: -.3px; color: #4f5258; }
.work span { flex: 1; padding-left: 8px; }
.prompt { margin: 22px 0 0 6px; width: 450px; height: 75px; border: 1px solid #b9bbbe; border-radius: 6px; padding: 6px; letter-spacing: -.1px; }
.ph { font-size: 14px; color: #73767c; line-height: 26px; padding-left: 4px; letter-spacing: -.25px; }
.pbar { display: flex; align-items: center; margin-top: 11px; color: #3c3e42; }
.build { width: 80px; height: 24px; background: #eff0f2; border-radius: 4px; display: flex; align-items: center; padding-left: 5px; gap: 3px; font-size: 12px; color: #1b1d20; margin-right: 8px; }
.flip { transform: scaleY(-1); margin-left: 7px; }
.pbar > svg + svg { margin-left: 12px; }
.pbar > .opts { margin-left: auto !important; }
.pbar > .opts + svg { margin: 0 4px 0 16px; }

/* preview side */
.work-area { width: 1132px; }
.panes { height: 40px; display: flex; align-items: center; color: #55585e; font-size: 14px; }
.pane { width: 160px; height: 28px; margin-top: -1px; border-radius: 5px; display: flex; align-items: center; gap: 6px; padding: 0 8px 0 6px; }
.pane span { flex: 1; }
.pane > svg:last-child { color: #777; }
.pane + .pane { padding-left: 10px; margin-right: 10px; width: 164px; gap: 5px; }
.on { background: #eff0f2; color: #1b1d20; }
.olive { color: #6b5a20; }
.tools { margin-left: auto; display: flex; align-items: center; color: #222; margin-top: -1px; }
.tools .i18 { margin: 0 9px 0 15px; }
.publish { height: 28px; width: 74px; border-radius: 5px; background: #6bb5ff; display: flex; align-items: center; justify-content: center; gap: 4px; font-size: 12px; color: #0b2038; margin-right: 10px; letter-spacing: -.1px; }
.tools > :last-child { margin-right: 6px; }
.frame { height: 693px; border: 1px solid #aeb0b3; border-radius: 5px; overflow: hidden; }
.fbar { height: 35px; display: flex; align-items: center; color: #6b6e74; padding: 0 0 1px 8px; }
.fbar > svg:nth-child(2) { margin: 0 12px 0 14px; }
.dark { color: #222; }
.furl { width: 880px; height: 24px; margin: 0 8px 0 7px; background: #eff0f2; border-radius: 5px; display: flex; align-items: center; padding-left: 4px; font-size: 13.500px; gap: 2px; letter-spacing: -.4px; }
.furl em { color: #111; }
.theme { font-size: 14px; margin: 0 13px 0 8px; width: 42px; letter-spacing: -.2px; }
.fbar > svg:nth-of-type(5) { margin-left: 11px; }
.fbar > svg:last-child { margin-left: 10px; }
.view { height: 656px; display: flex; overflow: hidden; }
.dash { width: 1116px; flex: none; background: #111216; padding-left: 69.700px; color: #e8e9ed; font-family: Inter, sans-serif; }
.grid3 { width: 975.300px; display: grid; grid-template-columns: repeat(3, 1fr); gap: 16px; }
.card { border: 1px solid #2a2c34; border-radius: 12px; background: #17181d; padding: 0 24px; }
.pairs { margin-top: -30px; }
.pairs .card { height: 161px; padding-top: 22px; }
.r { height: 28px; display: flex; justify-content: space-between; align-items: center; font-size: 14px; color: #8e98a6; }
.r b { font-family: "DejaVu Sans Mono", monospace; color: #eeeef2; font-size: 14px; font-weight: 600; letter-spacing: 0; }
.r.d { color: #f0f1f4; font-weight: 600; }
.r.d b { color: #f5626a; }
.est { border-top: 1px solid #252a35; margin-top: 4px; padding-top: 6px; font-size: 12px; line-height: 20px; color: #8595a6; }
h2 { font-size: 18px; line-height: 28px; font-weight: 600; letter-spacing: -.14px; margin: 24px 0 16px; }
.metrics .card { height: 126px; padding-top: 24px; }
h3 { display: flex; justify-content: space-between; font-size: 14px; font-weight: 500; line-height: 20px; letter-spacing: -.35px; }
h3 svg { margin-top: 2px; stroke-width: 2; }
.metrics strong { display: block; font-size: 24px; line-height: 32px; margin-top: 8px; font-weight: 700; letter-spacing: -.65px; }
.metrics .wide { letter-spacing: -.3px; }
.metrics small { display: block; font-size: 12px; line-height: 16px; color: #8595a6; }
.h2b { margin: 24px 0 16px; }
.grid2 { width: 976px; display: grid; grid-template-columns: repeat(2, minmax(0, 1fr)); gap: 24px; }
.chart { height: 160px; padding-top: 24px; }
.chead { display: flex; align-items: center; height: 54px; padding-bottom: 2px; }
.chead > svg { stroke-width: 2; }
.ct { font-size: 18px; line-height: 28px; font-weight: 500; letter-spacing: -.6px; margin-left: 8px; width: 191px; }
.red { color: #8c2529; }
.live { flex: none; width: 49px; height: 22px; margin-left: 4px; border: 1px solid #45191e; border-radius: 6px; background: #2c151a; color: #dc2424; text-align: center; font-size: 12px; line-height: 20px; font-weight: 600; }
.val { margin-left: auto; text-align: right; font-family: "DejaVu Sans Mono", monospace; }
.val strong { display: block; font-size: 24px; line-height: 32px; }
.val small { display: block; font-size: 12px; line-height: 16px; margin-top: 4px; color: #8595a6; }
.seg { display: flex; gap: 4px; margin-top: 14px; }
.seg b { width: 38px; height: 32px; border: 1px solid #292b32; border-radius: 6px; text-align: center; font-size: 12px; line-height: 30px; font-weight: 500; }
.seg b:nth-child(2) { width: 41px; }
.seg .sel { background: #b2d8ff; border-color: #cee6ff; color: #15233a; }
.two .chead { height: 56px; padding-bottom: 0; }
.two .ct { width: 209px; flex: none; margin-left: 8px; }
.two .val { margin-left: 0; width: 129px; display: flex; flex-direction: column; align-items: flex-end; }
.two .val strong { letter-spacing: -.05px; }
.two .live { margin-left: 5px; }
.two .seg { margin-top: 16px; }
.scroll { width: 14px; flex: none; display: flex; flex-direction: column; align-items: center; background: #fcfcfc; }
.scroll .up { flex: none; margin-top: 6px; border: 5px solid transparent; border-top: 0; border-bottom: 6px solid #8b8b8b; }
.thumb { width: 8px; height: 106px; border-radius: 4px; background: #8b8b8b; margin-top: 343px; }
.scroll .dn { flex: none; border: 5px solid transparent; border-bottom: 0; border-top: 6px solid #8b8b8b; margin-top: 183px; }

/* taskbar */
.taskbar { height: 40px; flex: none; background: linear-gradient(90deg, #131e29 0, #1b2730 330px, #343439 440px, #343438 600px, #303137 690px, #192a30 760px, #182c31 980px, #1b202c 1030px, #20222a 1150px, #162a31 1350px, #14262c 1420px, #17222c 1600px); display: flex; color: #fff; font-family: "Open Sans", sans-serif; }
.start { width: 48px; display: grid; place-items: center; }
.search { width: 288px; height: 40px; background: #f2f2f2; border: 1px solid #c8c8c8; color: #2b2b2b; display: flex; align-items: center; padding-left: 11px; font-size: 15px; letter-spacing: -.3px; }
.search span { flex: 1; padding-left: 10px; }
.earth { width: 66px; height: 38px; margin-right: 5px; }
.apps { display: flex; align-items: center; padding-left: 15px; width: 811px; }
.apps > svg:nth-child(1) { margin-right: 30px; }
.apps > .i24 { margin-right: 25px; }
.apps > .i24:nth-child(5) { margin-right: 13px; }
.open { width: 48px; height: 40px; display: grid; place-items: center; border-bottom: 2px solid #76b9ed; background: #5c5e63; }
.open.word { width: 40px; margin-left: 5px; background: none; }
.tray { flex: 1; display: flex; align-items: center; padding-left: 10px; position: relative; }
.warn { width: 22px; height: 20px; }
.alert { font-size: 14px; letter-spacing: -.35px; width: 169px; padding-left: 9px; }
.tray .up { transform: scaleY(-1); margin: 0 7px 0 0; }
.tray .i16 + .i16 { margin-left: 8px; }
.lang, .clock { font-size: 12px; line-height: 17px; letter-spacing: -.4px; }
.lang { width: 32px; margin-left: 9px; }
.clock { width: 60px; text-align: center; }
.notif { position: relative; margin-left: 20px; width: 27px; height: 20px; }
.notif em { position: absolute; left: 8px; top: 8px; width: 16px; height: 16px; border-radius: 50%; border: 1px solid #aaa; background: #303238; font-size: 11px; line-height: 14px; text-align: center; }
.edge { position: absolute; right: 3px; top: 0; width: 1px; height: 40px; background: #747980; }
```
